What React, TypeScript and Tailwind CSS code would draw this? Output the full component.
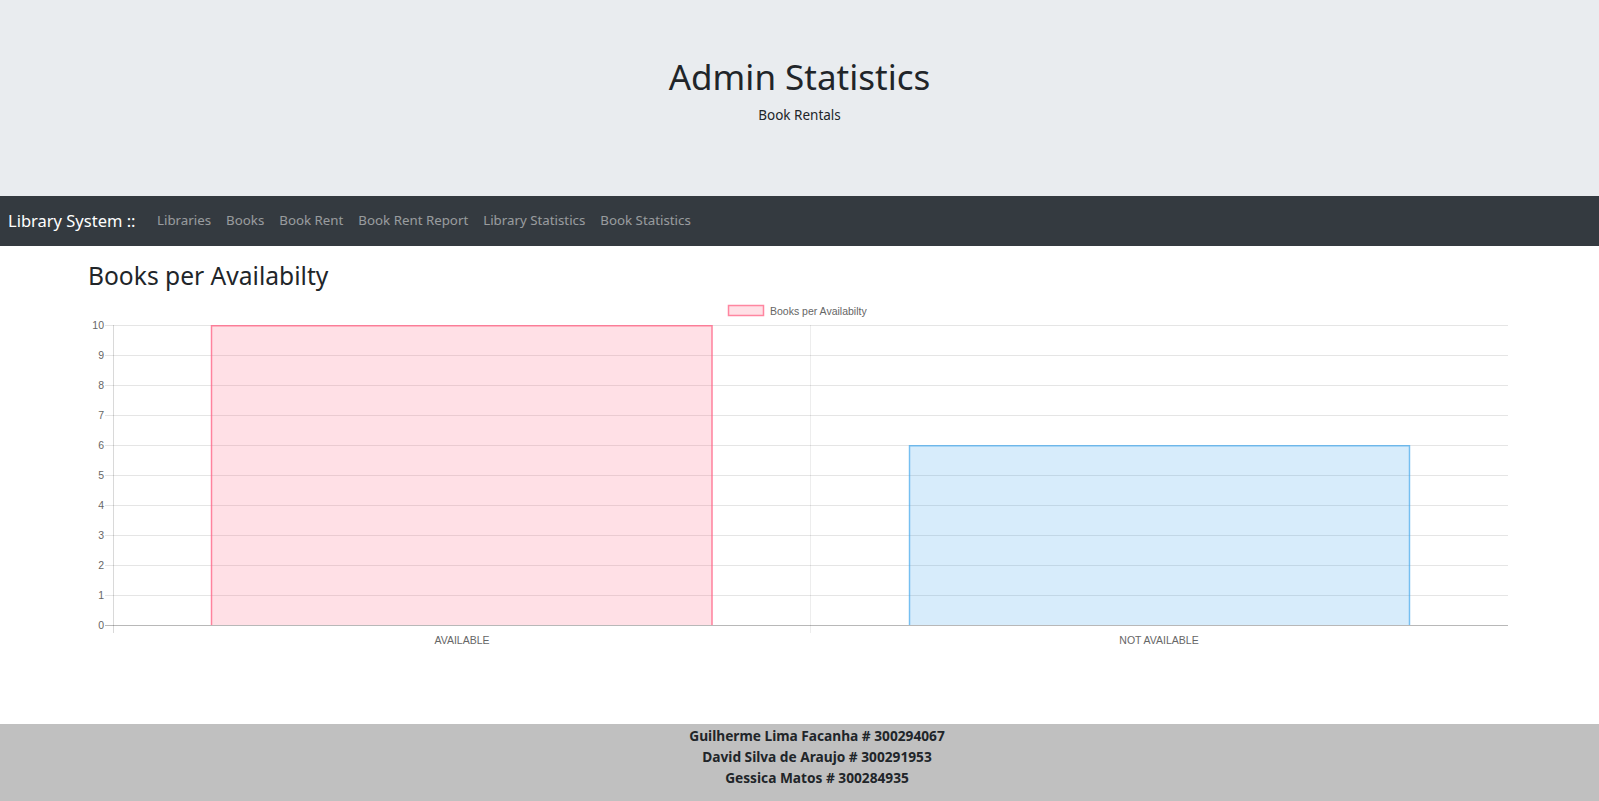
import React from "react";

const sans = { fontFamily: '"Noto Sans", "Open Sans", sans-serif' };

function Chart() {
  const ticks = [10, 9, 8, 7, 6, 5, 4, 3, 2, 1, 0];
  const labelFont = '"Liberation Sans", Arial, sans-serif';
  return (
    <svg width={1440} height={356} viewBox="0 0 1440 356" className="block">
      {/* horizontal grid lines */}
      {ticks.map((t, i) => {
        const y = 30 + 30 * i + 0.5;
        return (
          <line
            key={t}
            x1={25}
            x2={1428}
            y1={y}
            y2={y}
            stroke={t === 0 ? "rgba(0,0,0,0.28)" : "rgba(0,0,0,0.1)"}
            strokeWidth={1}
          />
        );
      })}
      {/* vertical grid lines */}
      <line x1={33.5} x2={33.5} y1={30} y2={338} stroke="rgba(0,0,0,0.15)" strokeWidth={1} />
      <line x1={730.5} x2={730.5} y1={30} y2={338} stroke="rgba(0,0,0,0.07)" strokeWidth={1} />
      {/* y labels */}
      {ticks.map((t, i) => (
        <text
          key={"l" + t}
          x={24}
          y={30 + 30 * i + 4}
          textAnchor="end"
          fontSize={10.5}
          fill="#666"
          fontFamily={labelFont}
        >
          {t}
        </text>
      ))}
      {/* bars */}
      <rect x={131} y={30} width={501.5} height={300} fill="rgba(255,99,132,0.2)" />
      <path d="M131.5 330 V30.75 H632 V330" fill="none" stroke="rgba(255,99,132,0.75)" strokeWidth={1.5} />
      <rect x={829} y={150} width={501} height={180} fill="rgba(54,162,235,0.2)" />
      <path d="M829.5 330 V150.75 H1329.5 V330" fill="none" stroke="rgba(54,162,235,0.6)" strokeWidth={1.5} />
      {/* x labels */}
      <text x={382} y={349} textAnchor="middle" fontSize={10.5} fill="#666" fontFamily={labelFont}>
        AVAILABLE
      </text>
      <text x={1079} y={349} textAnchor="middle" fontSize={10.5} fill="#666" fontFamily={labelFont}>
        NOT AVAILABLE
      </text>
      {/* legend */}
      <rect x={648.5} y={10.5} width={35} height={10} fill="rgba(255,99,132,0.2)" stroke="rgba(255,99,132,0.75)" strokeWidth={1.5} />
      <text x={690} y={19.5} fontSize={10.5} fill="#666" fontFamily={labelFont}>
        Books per Availabilty
      </text>
    </svg>
  );
}

export default function App() {
  const links = ["Libraries", "Books", "Book Rent", "Book Rent Report", "Library Statistics", "Book Statistics"];
  return (
    <div className="flex h-[801px] flex-col bg-white text-[#212529]" style={sans}>
      <header className="h-[196px] shrink-0 bg-[#e9ecef] pt-[56px] text-center">
        <h1 className="text-[35px] leading-[1.2] font-normal text-[#212529]">Admin Statistics</h1>
        <p className="mt-[7px] text-[13.5px] leading-[21px]">Book Rentals</p>
      </header>
      <nav className="flex h-[50px] shrink-0 items-center bg-[#343a40] px-2">
        <span className="mr-[14px] text-[16.5px] text-white">Library System ::</span>
        <ul className="flex items-center">
          {links.map((l) => (
            <li key={l} className="px-[7.5px] text-[13.3px] text-[rgba(255,255,255,0.5)]">
              {l}
            </li>
          ))}
        </ul>
      </nav>
      <main className="flex-1 pl-[80px] pt-[15px]">
        <h3 className="ml-2 text-[24.6px] leading-[1.2] font-normal">Books per Availabilty</h3>
        <div className="mt-[4px]">
          <Chart />
        </div>
      </main>
      <footer className="h-[77px] shrink-0 bg-[#c0c0c0] pt-[1px] pl-[35px] text-center text-[13.7px] font-bold leading-[21px] text-[#212529]">
        <p>Guilherme Lima Facanha # 300294067</p>
        <p>David Silva de Araujo # 300291953</p>
        <p>Gessica Matos # 300284935</p>
      </footer>
    </div>
  );
}
